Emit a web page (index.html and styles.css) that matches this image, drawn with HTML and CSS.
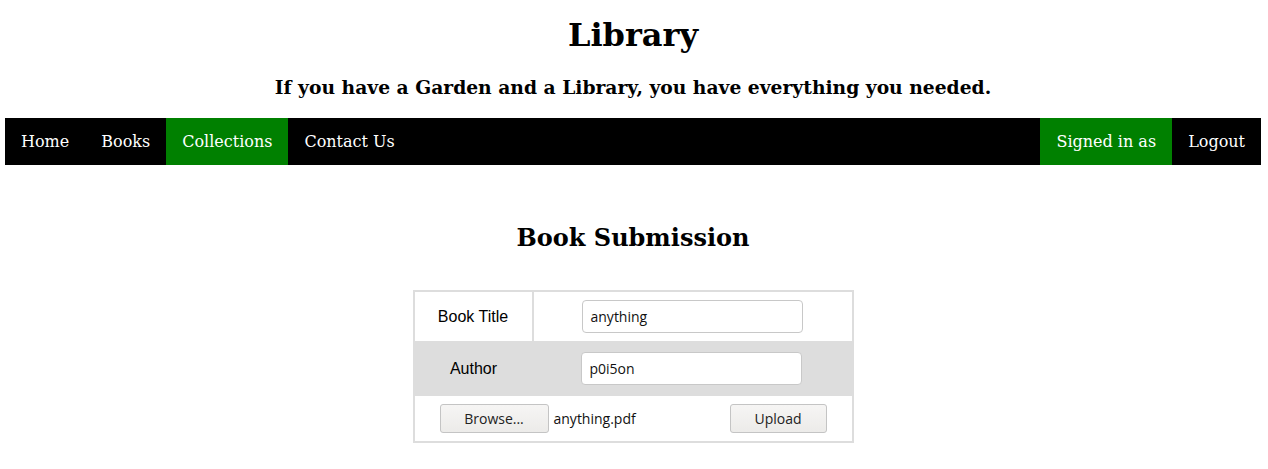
FILE: index.html
```html
<!DOCTYPE html>
<html>
<head>
<meta charset="utf-8">
<link rel="stylesheet" href="styles.css">
</head>
<body>
<header class="masthead">
  <h1 class="site-title">Library</h1>
  <p class="tagline">If you have a Garden and a Library, you have everything you needed.</p>
</header>
<nav class="topnav">
  <div class="nav-left">
    <a class="nav-link">Home</a>
    <a class="nav-link">Books</a>
    <a class="nav-link active">Collections</a>
    <a class="nav-link">Contact Us</a>
  </div>
  <div class="nav-right">
    <a class="nav-link active">Signed in as</a>
    <a class="nav-link">Logout</a>
  </div>
</nav>
<main class="content">
  <h2 class="section-title">Book Submission</h2>
  <table class="form-table">
    <tr class="row-title">
      <td class="label">Book Title</td>
      <td class="field"><div class="text-input">anything</div></td>
    </tr>
    <tr class="row-author">
      <td class="label">Author</td>
      <td class="field"><div class="text-input">p0i5on</div></td>
    </tr>
    <tr class="row-file">
      <td colspan="2" class="file-cell">
        <div class="file-line">
          <button class="btn btn-browse">Browse...</button>
          <span class="file-name">anything.pdf</span>
          <button class="btn btn-upload">Upload</button>
        </div>
      </td>
    </tr>
  </table>
</main>
</body>
</html>
```

FILE: styles.css
```css
html, body {
  margin: 0;
  padding: 0;
  background: #fff;
}
body {
  padding: 0 7px 0 5px;
  font-family: "DejaVu Serif", serif;
  color: #000;
}
.masthead {
  text-align: center;
  padding-top: 15px;
}
.site-title {
  margin: 0;
  font-size: 32px;
  line-height: 40px;
  font-weight: bold;
}
.tagline {
  margin: 20px 0 0;
  font-size: 18.72px;
  line-height: 25px;
  font-weight: bold;
}
.topnav {
  margin-top: 18px;
  background: #000;
  display: flex;
  justify-content: space-between;
  height: 47px;
}
.nav-left, .nav-right {
  display: flex;
}
.nav-link {
  display: flex;
  align-items: center;
  padding: 0 16px;
  color: #fff;
  font-size: 16px;
  text-decoration: none;
}
.nav-link.active {
  background: #008000;
}
.content {
  display: flex;
  flex-direction: column;
  align-items: center;
}
.section-title {
  margin: 57px 0 0;
  font-size: 24px;
  line-height: 32px;
  font-weight: bold;
}
.form-table {
  margin-top: 36px;
  border-collapse: collapse;
  border: 2px solid #ddd;
  width: 441px;
  font-family: "Liberation Sans", Arial, sans-serif;
  font-size: 16px;
}
.form-table td {
  padding: 0;
}
.row-title td {
  height: 49px;
}
.row-title .label {
  border-right: 2px solid #ddd;
}
.row-author td {
  height: 55px;
  background: #ddd;
}
.row-file td {
  height: 45px;
}
.label {
  width: 117px;
  text-align: center;
}
.field {
  padding-left: 48px !important;
}
.text-input {
  width: 211px;
  height: 31px;
  border: 1px solid #c8c8c8;
  border-radius: 4px;
  background: #fff;
  padding: 0 0 0 8px;
  display: flex;
  align-items: center;
  font-family: "Open Sans", sans-serif;
  font-size: 14px;
  color: #111;
}
.file-line {
  display: flex;
  align-items: center;
  padding-left: 25px;
}
.btn {
  height: 29px;
  border: 1px solid #c4c4c4;
  border-radius: 3px;
  background: linear-gradient(#f6f5f4, #ecebe9);
  font-family: "Open Sans", sans-serif;
  font-size: 14px;
  color: #222;
  padding: 0;
}
.btn-browse {
  width: 109px;
}
.file-name {
  margin-left: 5px;
  font-family: "Open Sans", sans-serif;
  font-size: 14px;
  color: #111;
  flex: 1;
}
.btn-upload {
  width: 97px;
  margin-right: 25px;
}
```
